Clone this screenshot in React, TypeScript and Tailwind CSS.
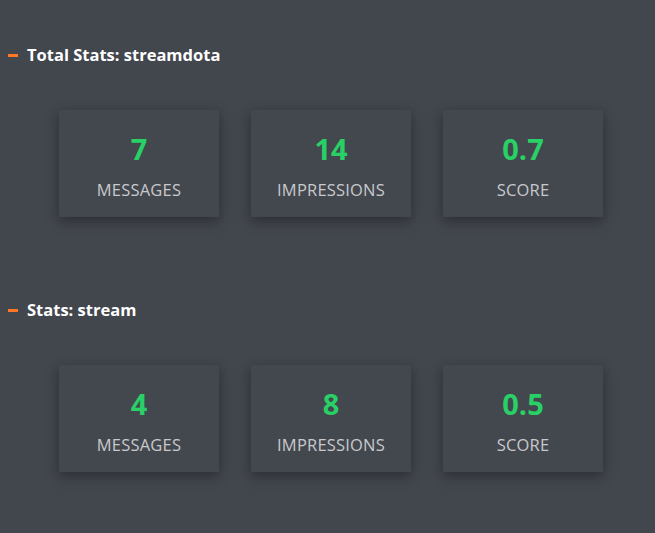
const sections = [
  {
    title: "Total Stats: streamdota",
    stats: [
      { value: "7", label: "MESSAGES" },
      { value: "14", label: "IMPRESSIONS" },
      { value: "0.7", label: "SCORE" },
    ],
  },
  {
    title: "Stats: stream",
    stats: [
      { value: "4", label: "MESSAGES" },
      { value: "8", label: "IMPRESSIONS" },
      { value: "0.5", label: "SCORE" },
    ],
  },
];

function StatCard({ value, label }: { value: string; label: string }) {
  return (
    <div className="w-[160px] h-[107px] bg-[#43474e] shadow-[0_4px_12px_rgba(0,0,0,0.35)] flex flex-col items-center">
      <div className="mt-[21px] text-[29px] leading-[36px] font-bold text-[#28d066]">{value}</div>
      <div className="mt-[12px] text-[16.5px] leading-[22px] text-[#c8c9cc] tracking-[0.2px]">{label}</div>
    </div>
  );
}

export default function App() {
  return (
    <div className="min-h-[533px] bg-[#42464d] pt-[45px] font-['Open_Sans','Noto_Sans',sans-serif]">
      {sections.map((s, i) => (
        <section key={s.title} className={i === 0 ? "" : "mt-[83px]"}>
          <h2 className="flex items-center gap-[9px] pl-[8px] h-[20px] text-[16.5px] font-bold text-white">
            <span className="w-[10px] h-[3px] bg-[#ff7722]" />
            {s.title}
          </h2>
          <div className="mt-[45px] pl-[59px] flex gap-[32px]">
            {s.stats.map((st) => (
              <StatCard key={st.label} {...st} />
            ))}
          </div>
        </section>
      ))}
    </div>
  );
}
